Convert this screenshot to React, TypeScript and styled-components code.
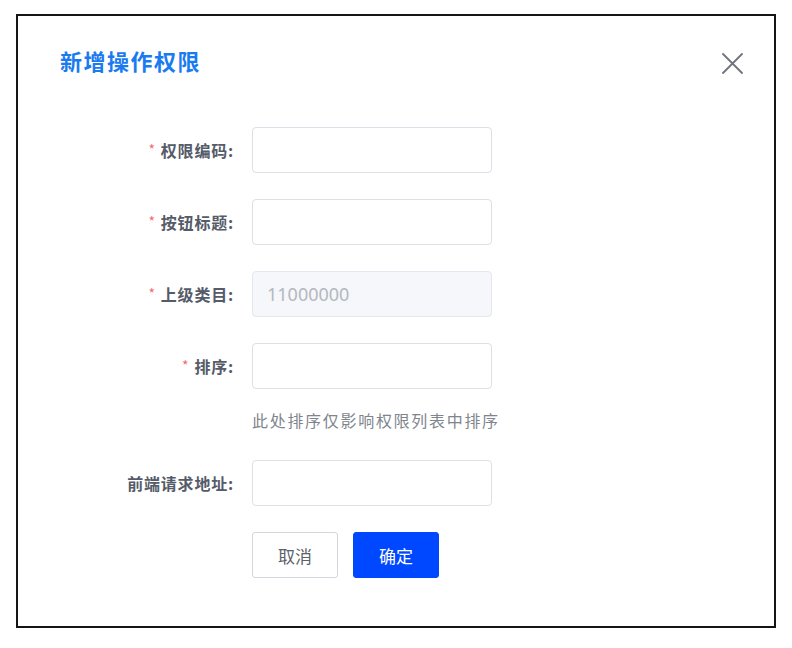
import React from 'react';
import styled, { createGlobalStyle } from 'styled-components';

const GlobalStyle = createGlobalStyle`
  html, body {
    margin: 0;
    padding: 0;
    background: #ffffff;
  }
  body {
    font-family: "Noto Sans CJK SC", "Noto Sans", sans-serif;
  }
`;

const Page = styled.div`
  padding: 14px 0 0 16px;
`;

const Dialog = styled.div`
  box-sizing: border-box;
  width: 760px;
  height: 614px;
  border: 2px solid #151515;
  background: #fff;
  display: flex;
  flex-direction: column;
`;

const Header = styled.div`
  display: flex;
  justify-content: space-between;
  align-items: flex-start;
  padding: 29px 31px 0 42px;
`;

const Title = styled.div`
  font-size: 22px;
  line-height: 30px;
  font-weight: 700;
  letter-spacing: 1.5px;
  color: #1a7bf0;
`;

const CloseButton = styled.button`
  border: none;
  background: transparent;
  padding: 0;
  margin-top: 8px;
  width: 21px;
  height: 21px;
  cursor: pointer;
  display: flex;
  &:focus {
    outline: none;
  }
`;

const Form = styled.div`
  display: flex;
  flex-direction: column;
  padding-top: 52px;
`;

const FormItem = styled.div<{ $gap?: number }>`
  display: flex;
  align-items: center;
  margin-bottom: ${(p) => (p.$gap === undefined ? 26 : p.$gap)}px;
`;

const Label = styled.label`
  box-sizing: border-box;
  width: 234px;
  padding-right: 18px;
  text-align: right;
  font-size: 16px;
  font-weight: 700;
  letter-spacing: 0.8px;
  color: #555b68;
`;

const Required = styled.span`
  color: #f56c6c;
  font-weight: 400;
  font-size: 14px;
  margin-right: 5px;
  position: relative;
  top: -2px;
`;

const Input = styled.input`
  box-sizing: border-box;
  width: 240px;
  height: 46px;
  border: 1px solid #dcdfe6;
  border-radius: 4px;
  padding: 0 14px;
  font-size: 18px;
  font-family: "Noto Sans", "Noto Sans CJK SC", sans-serif;
  color: #303133;
  background: #fff;
  &:disabled {
    background: #f5f7fa;
    border-color: #e4e7ed;
    color: #b4b8bf;
  }
  &:focus {
    outline: none;
  }
`;

const Hint = styled.div`
  margin: 20px 0 29px 234px;
  font-size: 16px;
  line-height: 22px;
  letter-spacing: 1.7px;
  color: #80858d;
`;

const Actions = styled.div`
  display: flex;
  gap: 15px;
  padding-left: 234px;
`;

const Button = styled.button<{ $primary?: boolean }>`
  box-sizing: border-box;
  width: 86px;
  height: 46px;
  border-radius: 3px;
  font-size: 17px;
  font-family: "Noto Sans CJK SC", sans-serif;
  cursor: pointer;
  border: 1px solid ${(p) => (p.$primary ? '#0048ff' : '#d3d6dc')};
  background: ${(p) => (p.$primary ? '#0048ff' : '#fff')};
  color: ${(p) => (p.$primary ? '#fff' : '#5c6068')};
  &:focus {
    outline: none;
  }
`;

const fields = [
  { label: '权限编码:', required: true },
  { label: '按钮标题:', required: true },
  { label: '上级类目:', required: true, value: '11000000', disabled: true },
];

const App = () => (
  <Page>
    <GlobalStyle />
    <Dialog>
      <Header>
        <Title>新增操作权限</Title>
        <CloseButton aria-label="关闭">
          <svg width="21" height="21" viewBox="0 0 21 21">
            <path d="M1 1 L20 20 M20 1 L1 20" stroke="#6f747c" strokeWidth="1.8" strokeLinecap="round" />
          </svg>
        </CloseButton>
      </Header>
      <Form>
        {fields.map((f) => (
          <FormItem key={f.label}>
            <Label>
              {f.required && <Required>*</Required>}
              {f.label}
            </Label>
            <Input defaultValue={f.value} disabled={f.disabled} />
          </FormItem>
        ))}
        <FormItem $gap={0}>
          <Label>
            <Required>*</Required>
            排序:
          </Label>
          <Input />
        </FormItem>
        <Hint>此处排序仅影响权限列表中排序</Hint>
        <FormItem>
          <Label>前端请求地址:</Label>
          <Input />
        </FormItem>
        <Actions>
          <Button>取消</Button>
          <Button $primary>确定</Button>
        </Actions>
      </Form>
    </Dialog>
  </Page>
);

export default App;
